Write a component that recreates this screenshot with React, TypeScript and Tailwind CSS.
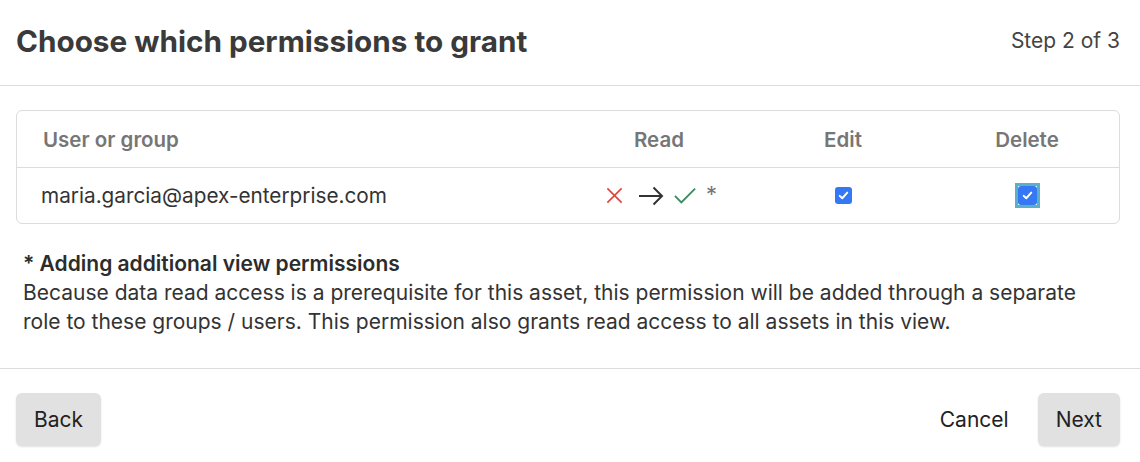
import React from 'react';

const font = { fontFamily: 'Inter, "Noto Sans", sans-serif' };

const CheckMark: React.FC = () => (
  <svg viewBox="0 0 16 16" className="w-[11px] h-[11px]" fill="none">
    <path d="M2.5 8.5 L6.2 12 L13.5 3.8" stroke="#fff" strokeWidth="2.8" strokeLinecap="round" strokeLinejoin="round" />
  </svg>
);

const Checkbox: React.FC<{ focused?: boolean }> = ({ focused }) => {
  const box = (
    <div className="w-[17px] h-[17px] rounded-[3px] bg-[#3478f6] flex items-center justify-center">
      <CheckMark />
    </div>
  );
  if (!focused) return box;
  return (
    <div className="w-[25px] h-[25px] bg-[#5aafc9] p-[3px]">
      <div className="w-full h-full bg-white flex items-center justify-center">
        <div className="w-[19px] h-[19px] rounded-[3px] bg-[#3478f6] flex items-center justify-center">
          <CheckMark />
        </div>
      </div>
    </div>
  );
};

const ReadChange: React.FC = () => (
  <div className="flex items-center">
    {/* red cross */}
    <svg viewBox="0 0 20 20" className="w-[19px] h-[19px]" fill="none">
      <path d="M2.5 2.5 L17.5 17.5 M17.5 2.5 L2.5 17.5" stroke="#d9443b" strokeWidth="1.6" />
    </svg>
    {/* arrow */}
    <svg viewBox="0 0 26 20" className="w-[26px] h-[20px] ml-[14px]" fill="none">
      <path d="M1 10 H24 M15.5 1.5 L24 10 L15.5 18.5" stroke="#333" strokeWidth="2" strokeLinejoin="miter" />
    </svg>
    {/* green check */}
    <svg viewBox="0 0 24 20" className="w-[22px] h-[19px] ml-[10px]" fill="none">
      <path d="M1 10.5 L8 17.5 L23 2.5" stroke="#3b8a60" strokeWidth="2" />
    </svg>
    <span className="ml-[10px] text-[22px] leading-[20px] h-[20px] text-[#777] -mt-[4px]">*</span>
  </div>
);

const Button: React.FC<{ children: React.ReactNode; plain?: boolean }> = ({ children, plain }) => (
  <button
    className={`h-[53px] px-[18px] rounded-[6px] text-[21px] leading-none text-[#222] ${
      plain ? 'bg-transparent' : 'bg-[#e1e1e1] shadow-[0_1px_2px_rgba(0,0,0,0.12)]'
    }`}
  >
    {children}
  </button>
);

export default function App() {
  return (
    <div className="w-[1140px] h-[462px] bg-white" style={font}>
      {/* header */}
      <div className="h-[86px] pl-[16px] pr-5 flex items-center justify-between border-b border-[#dcdcdc]">
        <h1 className="text-[29.7px] leading-[36px] font-bold text-[#3a3a3a] -mt-[4px]">
          Choose which permissions to grant
        </h1>
        <span className="text-[21px] leading-[28px] text-[#444] -mt-[4px]">Step 2 of 3</span>
      </div>

      {/* table */}
      <div className="pl-4 pr-5 pt-[24px]">
        <div className="border border-[#dcdcdc] rounded-[6px]">
          <div className="grid grid-cols-[550px_184px_184px_184px] h-[57px] items-center border-b border-[#dcdcdc] text-[20.5px] leading-[28px] font-semibold text-[#767676]">
            <div className="pl-[26px] pt-[1px]">User or group</div>
            <div className="text-center pt-[1px]">Read</div>
            <div className="text-center pt-[1px]">Edit</div>
            <div className="text-center pt-[1px]">Delete</div>
          </div>
          <div className="grid grid-cols-[550px_184px_184px_184px] h-[55px] items-center text-[20.75px] leading-[28px] text-[#333]">
            <div className="pl-[24px]">maria.garcia@apex-enterprise.com</div>
            <div className="flex justify-center pl-[4px]">
              <ReadChange />
            </div>
            <div className="flex justify-center">
              <Checkbox />
            </div>
            <div className="flex justify-center">
              <Checkbox focused />
            </div>
          </div>
        </div>

        {/* note */}
        <div className="mt-[25px] pl-[7px] pb-[32px] text-[21px] leading-[29px] text-[#333]">
          <div className="font-semibold text-[#2c2c2c]">* Adding additional view permissions</div>
          <p>
            Because data read access is a prerequisite for this asset, this permission will be added through a separate
            <br />
            role to these groups / users. This permission also grants read access to all assets in this view.
          </p>
        </div>
      </div>

      {/* footer */}
      <div className="border-t border-[#dcdcdc] pl-4 pr-5 pt-[24px] flex items-center justify-between">
        <Button>Back</Button>
        <div className="flex items-center gap-[11px]">
          <Button plain>Cancel</Button>
          <Button>Next</Button>
        </div>
      </div>
    </div>
  );
}
